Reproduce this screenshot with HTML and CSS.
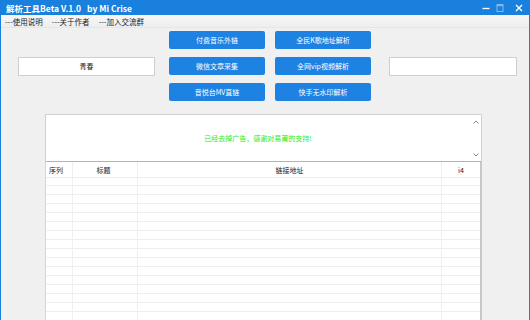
FILE: index.html
```html
<!DOCTYPE html>
<html>
<head>
<meta charset="utf-8">
<link rel="stylesheet" href="styles.css">
</head>
<body>
<div class="window">
  <div class="titlebar">
    <span class="title">解析工具Beta V.1.0</span>
    <span class="author">by Mi Crise</span>
    <div class="controls">
      <svg class="ctl-min" width="8" height="10" viewBox="0 0 8 10"><path d="M0.5 5.5h7" stroke="#fff" stroke-width="1.3"/></svg>
      <svg class="ctl-max" width="8" height="10" viewBox="0 0 8 10"><rect x="1" y="1.5" width="6" height="7" fill="none" stroke="#7fb8ef" stroke-width="1"/><path d="M1 2.5h6" stroke="#7fb8ef" stroke-width="1.5"/></svg>
      <svg class="ctl-close" width="8" height="10" viewBox="0 0 8 10"><path d="M1 2l6 6M7 2l-6 6" stroke="#fff" stroke-width="1.4"/></svg>
    </div>
  </div>
  <div class="menubar">
    <span>---使用说明</span>
    <span>---关于作者</span>
    <span>---加入交流群</span>
  </div>
  <div class="content">
    <div class="toprow">
      <div class="field left">青春</div>
      <div class="buttons">
        <div class="btn">付费音乐外链</div>
        <div class="btn">全民K歌地址解析</div>
        <div class="btn">微信文章采集</div>
        <div class="btn">全网vip视频解析</div>
        <div class="btn">音悦台MV直链</div>
        <div class="btn">快手无水印解析</div>
      </div>
      <div class="field right"></div>
    </div>
    <div class="panel">
      <div class="memo">
        <div class="memo-text">已经去掉广告，感谢对易莆的支持!</div>
        <div class="vscroll">
          <svg width="8" height="6" viewBox="0 0 8 6"><path d="M1.5 4.5L4 2l2.5 2.5" fill="none" stroke="#888" stroke-width="1"/></svg>
          <svg width="8" height="6" viewBox="0 0 8 6"><path d="M1.5 1.5L4 4l2.5-2.5" fill="none" stroke="#888" stroke-width="1"/></svg>
        </div>
      </div>
      <div class="table">
        <div class="thead">
          <div class="c c1">序列</div>
          <div class="c c2">标题</div>
          <div class="c c3">链接地址</div>
          <div class="c c4">i4</div>
        </div>
        <div class="tbody">
          <div class="c c1"></div>
          <div class="c c2"></div>
          <div class="c c3"></div>
          <div class="c c4"></div>
        </div>
      </div>
    </div>
  </div>
</div>
</body>
</html>
```
FILE: styles.css
```css
html, body {
  margin: 0;
  padding: 0;
}
body {
  width: 530px;
  height: 320px;
  overflow: hidden;
  font-family: "Noto Sans CJK SC", "Noto Sans", sans-serif;
  background: #f0f0f0;
}
.window {
  width: 530px;
  height: 320px;
  box-sizing: border-box;
  border-left: 1px solid #1a80dd;
  border-right: 1px solid #1a80dd;
  display: flex;
  flex-direction: column;
  background: #f0f0f0;
}
.titlebar {
  height: 15px;
  background: #1a80dd;
  color: #fff;
  display: flex;
  align-items: center;
  font-size: 8.5px;
  font-weight: bold;
  padding-left: 5px;
  flex: none;
}
.title {
  width: 81px;
  white-space: nowrap;
}
.author {
  white-space: nowrap;
}
.controls {
  margin-left: auto;
  display: flex;
  align-items: center;
  margin-right: 6px;
}
.ctl-max {
  margin-left: 6px;
}
.ctl-close {
  margin-left: 11px;
}
.menubar {
  height: 13px;
  background: linear-gradient(#f7f7f7, #eeeeee);
  display: flex;
  align-items: center;
  font-size: 7.5px;
  color: #222;
  padding-left: 4px;
  gap: 9px;
  flex: none;
  border-bottom: 1px solid #e6e6e6;
  box-sizing: border-box;
}
.content {
  flex: 1;
  display: flex;
  flex-direction: column;
  min-height: 0;
}
.toprow {
  display: flex;
  align-items: center;
  padding: 3px 0 0 17px;
}
.field {
  height: 19px;
  box-sizing: border-box;
  background: #fff;
  border: 1px solid #cfcfcf;
  font-size: 7px;
  color: #222;
  display: flex;
  align-items: center;
  justify-content: center;
}
.field.left {
  width: 137px;
}
.field.right {
  width: 128px;
}
.buttons {
  margin: 0 18px 0 14px;
  display: grid;
  grid-template-columns: 96px 96px;
  grid-auto-rows: 18px;
  column-gap: 10px;
  row-gap: 8px;
}
.btn {
  background: #1e82e3;
  border-radius: 2px;
  color: #fff;
  font-size: 7px;
  display: flex;
  align-items: center;
  justify-content: center;
}
.panel {
  margin: 13px 0 0 44px;
  width: 437px;
  flex: 1;
  display: flex;
  flex-direction: column;
  min-height: 0;
}
.memo {
  height: 48px;
  box-sizing: border-box;
  background: #fff;
  border: 1px solid #d0d0d0;
  border-bottom: 1px solid #b4b4b4;
  display: flex;
  flex: none;
}
.memo-text {
  flex: 1;
  display: flex;
  align-items: center;
  justify-content: center;
  color: #22ee22;
  font-size: 7px;
  padding-bottom: 1px;
}
.vscroll {
  width: 11px;
  display: flex;
  flex-direction: column;
  justify-content: space-between;
  align-items: center;
  padding: 4px 0 3px;
}
.table {
  flex: 1;
  background: #fff;
  border-left: 1px solid #d6d6d6;
  border-right: 2px solid #c8c8c8;
  display: flex;
  flex-direction: column;
}
.thead {
  height: 15px;
  display: flex;
  flex: none;
  font-size: 7px;
  color: #222;
  border-bottom: 1px solid #ececec;
}
.thead .c {
  display: flex;
  align-items: center;
}
.c {
  box-sizing: border-box;
  border-right: 1px solid #eeeeee;
}
.c1 {
  width: 27px;
  padding-left: 3px;
}
.c2 {
  width: 65px;
  justify-content: center;
  padding-right: 3px;
}
.c3 {
  width: 304px;
  justify-content: center;
}
.c4 {
  flex: 1;
  justify-content: center;
  border-right: none;
}
.tbody {
  flex: 1;
  display: flex;
  background: repeating-linear-gradient(#fff 0, #fff 8px, #eeeeee 8px, #eeeeee 9px);
  background-position: 0 -1px;
}
.tbody .c {
  border-right-color: #f0f0f0;
}
```
